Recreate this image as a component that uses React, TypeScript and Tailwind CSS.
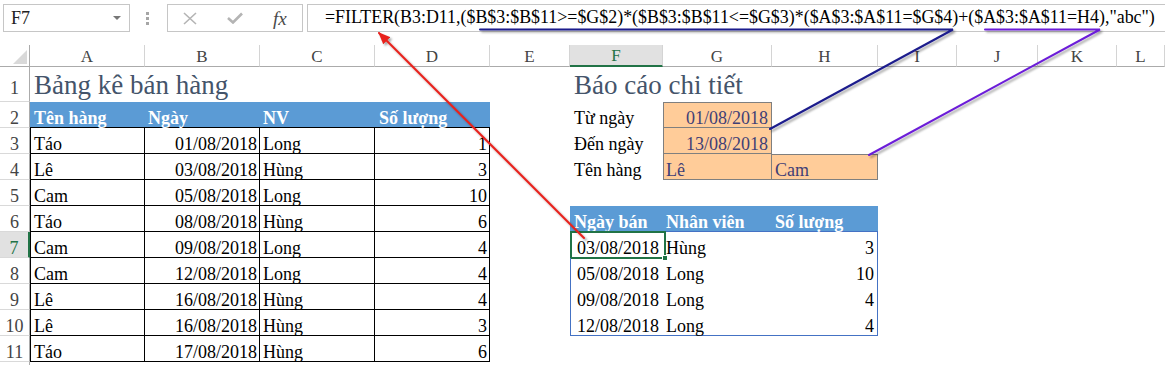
import React from 'react';

const GRID =
  'grid grid-cols-[30px_115px_115px_115px_115px_80px_93px_109px_106px_79px_81px_79px_1fr]';
const LETTERS = ['A', 'B', 'C', 'D', 'E', 'F', 'G', 'H', 'I', 'J', 'K', 'L'];

const sales = [
  ['Táo', '01/08/2018', 'Long', '1'],
  ['Lê', '03/08/2018', 'Hùng', '3'],
  ['Cam', '05/08/2018', 'Long', '10'],
  ['Táo', '08/08/2018', 'Hùng', '6'],
  ['Cam', '09/08/2018', 'Long', '4'],
  ['Cam', '12/08/2018', 'Long', '4'],
  ['Lê', '16/08/2018', 'Hùng', '4'],
  ['Lê', '16/08/2018', 'Hùng', '3'],
  ['Táo', '17/08/2018', 'Hùng', '6'],
];

const report = [
  ['03/08/2018', 'Hùng', '3'],
  ['05/08/2018', 'Long', '10'],
  ['09/08/2018', 'Long', '4'],
  ['12/08/2018', 'Long', '4'],
];

const cell = 'flex items-end leading-none whitespace-nowrap text-[18px]';
const head = `${cell} bg-[#5b9bd5] text-white font-bold`;
const input = `${cell} bg-[#ffcc99] text-[#3f3f76] border-[#7f7f7f]`;

interface RowProps {
  n?: number;
  height: string;
  active?: boolean;
  first?: boolean;
  children?: React.ReactNode;
}

const SheetRow: React.FC<RowProps> = ({ n, height, active, first, children }) => (
  <div className={`${GRID} ${height}`}>
    <div
      className={`flex items-end justify-center leading-none text-[18px] border-b border-b-[#d9d9d9] ${
        first ? 'pb-[4px]' : ''
      } ${
        active
          ? 'bg-[#e1e1e1] text-[#217346] border-r-2 border-r-[#217346]'
          : 'text-[#444] border-r border-r-[#ababab]'
      }`}
    >
      {n}
    </div>
    {children}
  </div>
);

const SalesCells: React.FC<{ row: string[] }> = ({ row }) => (
  <>
    <div className={`${cell} border-l border-r border-b border-black pl-[3px]`}>{row[0]}</div>
    <div className={`${cell} justify-end border-r border-b border-black pr-[2px]`}>{row[1]}</div>
    <div className={`${cell} border-r border-b border-black pl-[3px]`}>{row[2]}</div>
    <div className={`${cell} justify-end border-r border-b border-black pr-[2px]`}>{row[3]}</div>
  </>
);

const ReportCells: React.FC<{ row: string[]; i: number }> = ({ row, i }) => {
  const last = i === report.length - 1;
  const bottom = last ? 'border-b border-b-[#4472c4]' : 'pb-[1px]';
  return (
    <>
      <div className={`${cell} relative justify-end border-l border-l-[#4472c4] pr-[4px] ${bottom}`}>
        {row[0]}
        {i === 0 && (
          <div className="absolute -left-[1px] -top-[1px] w-[96px] h-[28px] border-2 border-[#217346]">
            <div className="absolute -right-[4px] -bottom-[4px] w-[6px] h-[6px] bg-[#217346] border border-white" />
          </div>
        )}
      </div>
      <div className={`${cell} pl-[3px] ${bottom}`}>{row[1]}</div>
      <div className={`${cell} justify-end border-r border-r-[#4472c4] pr-[3px] ${bottom}`}>{row[2]}</div>
    </>
  );
};

const Toolbar: React.FC = () => (
  <div className="flex items-start h-[45px] pt-[4px]">
    <div className="ml-[3px] w-[127px] h-[28px] border border-[#c6c6c6] flex items-center justify-between pl-[7px] pr-[8px]">
      <span className="text-[18px] leading-none text-[#222]">F7</span>
      <svg width="8" height="4" viewBox="0 0 8 4">
        <path d="M0 0 L8 0 L4 4 Z" fill="#777" />
      </svg>
    </div>
    <div className="ml-[16px] mt-[8px] flex flex-col gap-[2px]">
      <div className="w-[3px] h-[3px] bg-[#a6a6a6]" />
      <div className="w-[3px] h-[3px] bg-[#a6a6a6]" />
      <div className="w-[3px] h-[3px] bg-[#a6a6a6]" />
    </div>
    <div className="ml-[18px] w-[136px] h-[28px] border border-[#c6c6c6] flex items-center pl-[15px]">
      <svg width="14" height="13" viewBox="0 0 14 13">
        <path d="M1 1 L13 12 M13 1 L1 12" stroke="#b4b4b4" strokeWidth="1.6" />
      </svg>
      <svg className="ml-[30px]" width="16" height="12" viewBox="0 0 16 12">
        <path d="M1 6 L6 10.5 L15 1.5" stroke="#b4b4b4" strokeWidth="2.6" fill="none" />
      </svg>
      <span className="ml-[30px] italic text-[19px] leading-none text-[#4a4a4a]">fx</span>
    </div>
    <div className="ml-[4px] flex-1 h-[28px] border-t border-b border-l border-[#c6c6c6] flex items-center pl-[17px]">
      <span className="text-[17.9px] leading-none text-black whitespace-nowrap">
        =FILTER(B3:D11,($B$3:$B$11&gt;=$G$2)*($B$3:$B$11&lt;=$G$3)*($A$3:$A$11=$G$4)+($A$3:$A$11=H4),"abc")
      </span>
    </div>
  </div>
);

const Annotations: React.FC = () => (
  <svg className="absolute inset-0 pointer-events-none" width="1165" height="365" viewBox="0 0 1165 365">
    <defs>
      <filter id="sh" x="-10%" y="-10%" width="120%" height="120%">
        <feDropShadow dx="2" dy="2" stdDeviation="1.2" floodColor="#000" floodOpacity="0.35" />
      </filter>
      <marker id="arrow" markerWidth="12" markerHeight="10" refX="11" refY="5" orient="auto" markerUnits="userSpaceOnUse">
        <path d="M0 0 L12 5 L0 10 Z" fill="#e8231f" />
      </marker>
    </defs>
    <g filter="url(#sh)" fill="none" strokeLinecap="round">
      <path d="M480 29.5 L953 29.5 L770 129" stroke="#1b1b8c" strokeWidth="2" />
      <path d="M985 29.5 L1100 29.5 L869 155" stroke="#6c1fd8" strokeWidth="2" />
      <line x1="584" y1="238" x2="379" y2="33" stroke="#e8231f" strokeWidth="2" markerEnd="url(#arrow)" />
    </g>
  </svg>
);

const App: React.FC = () => {
  return (
    <div className="relative w-[1165px] h-[365px] overflow-hidden bg-white text-black font-['Liberation_Serif',serif]">
      <Toolbar />

      {/* column headers */}
      <div className={`${GRID} h-[22px]`}>
        <div className="relative border-r border-r-[#ababab] border-b border-b-[#ababab]">
          <svg className="absolute left-[13px] top-[5px]" width="14" height="14" viewBox="0 0 14 14">
            <path d="M14 0 L14 14 L0 14 Z" fill="#d9d9d9" />
          </svg>
        </div>
        {LETTERS.map((l) =>
          l === 'F' ? (
            <div
              key={l}
              className="flex items-end justify-center leading-none text-[17px] pb-[1px] bg-[#e1e1e1] text-[#217346] border-r border-r-[#d4d4d4] border-b-2 border-b-[#217346]"
            >
              {l}
            </div>
          ) : (
            <div
              key={l}
              className="flex items-end justify-center leading-none text-[17px] pb-[1px] text-[#444] border-r border-r-[#d4d4d4] border-b border-b-[#ababab]"
            >
              {l}
            </div>
          )
        )}
      </div>

      <SheetRow n={1} height="h-[35px]" first>
        <div className={`${cell} text-[27px] text-[#44546a] pl-[4px] pb-[3px]`}>Bảng kê bán hàng</div>
        <div />
        <div />
        <div />
        <div />
        <div className={`${cell} text-[27px] text-[#44546a] pl-[4px] pb-[3px]`}>Báo cáo chi tiết</div>
      </SheetRow>

      <SheetRow n={2} height="h-[26px]">
        <div className={`${head} border-b border-black pl-[4px]`}>Tên hàng</div>
        <div className={`${head} border-b border-black pl-[3px]`}>Ngày</div>
        <div className={`${head} border-b border-black pl-[3px]`}>NV</div>
        <div className={`${head} border-b border-black pl-[4px]`}>Số lượng</div>
        <div />
        <div className={`${cell} pl-[4px] pb-[1px]`}>Từ ngày</div>
        <div className={`${input} justify-end border pr-[3px]`}>01/08/2018</div>
      </SheetRow>

      <SheetRow n={3} height="h-[26px]">
        <SalesCells row={sales[0]} />
        <div />
        <div className={`${cell} pl-[4px] pb-[1px]`}>Đến ngày</div>
        <div className={`${input} justify-end border-x border-b pr-[3px]`}>13/08/2018</div>
      </SheetRow>

      <SheetRow n={4} height="h-[26px]">
        <SalesCells row={sales[1]} />
        <div />
        <div className={`${cell} pl-[4px] pb-[1px]`}>Tên hàng</div>
        <div className={`${input} border-x border-b pl-[2px]`}>Lê</div>
        <div className={`${input} border-t border-r border-b pl-[3px]`}>Cam</div>
      </SheetRow>

      <SheetRow n={5} height="h-[26px]">
        <SalesCells row={sales[2]} />
      </SheetRow>

      <SheetRow n={6} height="h-[26px]">
        <SalesCells row={sales[3]} />
        <div />
        <div className={`${head} border-b border-b-[#4472c4] pl-[4px]`}>Ngày bán</div>
        <div className={`${head} border-b border-b-[#4472c4] pl-[3px]`}>Nhân viên</div>
        <div className={`${head} border-b border-b-[#4472c4] pl-[3px]`}>Số lượng</div>
      </SheetRow>

      {report.map((r, i) => (
        <SheetRow key={i} n={7 + i} height="h-[26px]" active={i === 0}>
          <SalesCells row={sales[4 + i]} />
          <div />
          <ReportCells row={r} i={i} />
        </SheetRow>
      ))}

      <SheetRow n={11} height="h-[26px]">
        <SalesCells row={sales[8]} />
      </SheetRow>

      {/* row 12 only peeks in at the bottom edge */}
      <SheetRow height="h-[26px]" />

      <Annotations />
    </div>
  );
};

export default App;
